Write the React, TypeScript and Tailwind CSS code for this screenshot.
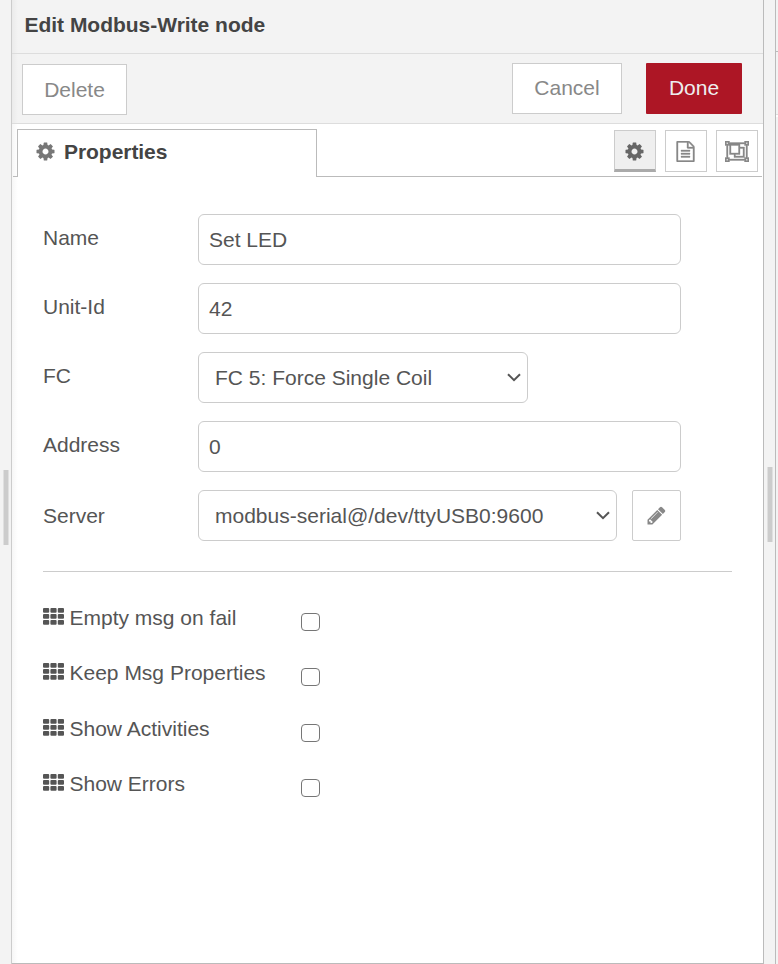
import type { ReactNode } from "react";

function Glyph({ d, wide = false, className = "" }: { d: string; wide?: boolean; className?: string }) {
  return (
    <svg viewBox={wide ? "0 0 2048 1792" : "0 0 1792 1792"} className={`${wide ? "h-[21px] w-6" : "h-[21px] w-[21px]"} shrink-0 fill-current ${className}`}>
      <path d={d} />
    </svg>
  );
}

const COG =
  "M1152 896q0-106-75-181t-181-75-181 75-75 181 75 181 181 75 181-75 75-181zm512-109v222q0 12-8 23t-20 13l-185 28q-19 54-39 91 35 50 107 138 10 12 10 25t-9 23q-27 37-99 108t-94 71q-12 0-26-9l-138-108q-44 23-91 38-16 136-29 186-7 28-36 28h-222q-14 0-24.5-8.5t-11.5-21.5l-28-184q-49-16-90-37l-141 107q-10 9-25 9-14 0-25-11-126-114-165-168-7-10-7-23 0-12 8-23 15-21 51-66.5t54-70.5q-27-50-41-99l-183-27q-13-2-21-12.5t-8-23.5v-222q0-12 8-23t19-13l186-28q14-46 39-92-40-57-107-138-10-12-10-24 0-10 9-23 26-36 98.5-107.5t94.5-71.5q13 0 26 10l138 107q44-23 91-38 16-136 29-186 7-28 36-28h222q14 0 24.5 8.5t11.5 21.5l28 184q49 16 90 37l142-107q9-9 24-9 13 0 25 10 129 119 165 170 7 8 7 22 0 12-8 23-15 21-51 66.5t-54 70.5q26 50 41 98l183 28q13 2 21 12.5t8 23.5z";
const FILE =
  "M1596 380q28 28 48 76t20 88v1152q0 40-28 68t-68 28h-1344q-40 0-68-28t-28-68v-1600q0-40 28-68t68-28h896q40 0 88 20t76 48zm-444-244v376h376q-10-29-22-41l-313-313q-12-12-41-22zm384 1528v-1024h-416q-40 0-68-28t-28-68v-416h-768v1536h1280zm-1024-864q0-14 9-23t23-9h704q14 0 23 9t9 23v64q0 14-9 23t-23 9h-704q-14 0-23-9t-9-23v-64zm736 224q14 0 23 9t9 23v64q0 14-9 23t-23 9h-704q-14 0-23-9t-9-23v-64q0-14 9-23t23-9h704zm0 256q14 0 23 9t9 23v64q0 14-9 23t-23 9h-704q-14 0-23-9t-9-23v-64q0-14 9-23t23-9h704z";
const GROUP =
  "M2048 384h-128v1024h128v384h-384v-128h-1280v128h-384v-384h128v-1024h-128v-384h384v128h1280v-128h384v384zm-256-256v128h128v-128h-128zm-1664 0v128h128v-128h-128zm128 1536v-128h-128v128h128zm1408-128v-128h128v-1024h-128v-128h-1280v128h-128v1024h128v128h1280zm256 128v-128h-128v128h128zm-640-1152h384v896h-896v-256h-384v-896h896v256zm-768 512h640v-640h-640v640zm1024 256v-640h-256v512h-384v128h640z";
const PENCIL =
  "M491 1536l91-91-235-235-91 91v107h128v128h107zm523-928q0-22-22-22-10 0-17 7l-542 542q-7 7-7 17 0 22 22 22 10 0 17-7l542-542q7-7 7-17zm-54-192l416 416-832 832h-416v-416zm683 96q0 53-37 90l-166 166-416-416 166-165q36-38 90-38 53 0 91 38l235 234q37 39 37 91z";

function GridIcon() {
  return (
    <svg viewBox="0 0 21 17" className="h-[17px] w-[21px] shrink-0 fill-current">
      {[0, 6, 12].map((y) =>
        [0, 7.4, 14.8].map((x) => <rect key={`${x}-${y}`} x={x} y={y} width="6.2" height="4.8" rx="1" />),
      )}
    </svg>
  );
}

function Chevron() {
  return (
    <svg viewBox="0 0 14 9" className="h-[9px] w-[14px] fill-none stroke-[#555] stroke-2">
      <path d="M1 1.2L7 7.2L13 1.2" />
    </svg>
  );
}

function Row({ label, low = false, children }: { label: string; low?: boolean; children: ReactNode }) {
  return (
    <div className="mb-[18px] flex h-[51px]">
      <div className={`w-[155px] leading-[30px] ${low ? "pt-[11px]" : "pt-[9px]"}`}>{label}</div>
      {children}
    </div>
  );
}

function Field({ value }: { value: string }) {
  return <div className="flex w-[483px] items-center rounded-[6px] border border-[#ccc] px-[10px] leading-[30px]">{value}</div>;
}

function Check({ label }: { label: string }) {
  return (
    <div className="flex h-[55.4px] items-start">
      <div className="pt-[5px]"><GridIcon /></div>
      <div className="ml-[5.5px] w-[231.5px] leading-[30px]">{label}</div>
      <div className="mt-[10px] h-[18px] w-[19px] rounded-[4px] border-[1.5px] border-[#767676] bg-white" />
    </div>
  );
}

export default function App() {
  return (
    <div className="flex h-[964px] w-[778px] overflow-hidden bg-[#f3f3f3] font-['Liberation_Sans',Arial,sans-serif] text-[21px] text-[#555]">
      <div className="flex w-3 shrink-0 flex-col border-r border-[#ccc] pl-[3px] pt-[470px]">
        <div className="h-[75px] w-[6px] border-x border-[#e0e0e0] bg-[#ccc]" />
      </div>

      <div className="flex w-[752px] shrink-0 flex-col border-r border-[#bbb] bg-[linear-gradient(to_right,rgba(0,0,0,0.035),transparent_6px)]">
        <div className="h-[54px] border-b border-[#ddd] pl-[12.5px] pt-[10px] font-bold leading-[30px] tracking-[-0.02px] text-[#444]">Edit Modbus-Write node</div>
        <div className="flex h-[70px] items-start border-b border-[#ddd] pl-[10px] pr-[21px] text-[#888]">
          <div className="mt-[10px] flex h-[51px] w-[105px] items-center justify-center border border-[#ccc] bg-white">Delete</div>
          <div className="ml-auto mt-[9px] flex h-[51px] w-[110px] items-center justify-center border border-[#ccc] bg-white pb-[2px]">Cancel</div>
          <div className="ml-6 mt-[9px] flex h-[51px] w-24 items-center justify-center rounded-[1px] bg-[#ad1625] pb-[2px] text-[#eee]">Done</div>
        </div>

        <div className="flex-1 border-b border-[#bbb] bg-white bg-[linear-gradient(to_right,rgba(0,0,0,0.035),transparent_6px)]">
          <div className="flex h-[53px] pt-[5px]">
            <div className="ml-px w-[4px] border-b border-[#bbb]" />
            <div className="flex h-12 w-[300px] items-center border border-b-0 border-[#bbb] bg-white pl-[17px] font-bold text-[#444]">
              <Glyph d={COG} className="mb-[5px] text-[#777]" />
              <span className="mb-[4px] ml-[8px] tracking-[-0.05px]">Properties</span>
            </div>
            <div className="mr-px flex flex-1 justify-end gap-[9px] border-b border-[#bbb] pr-[4px] pt-px text-[#888]">
              <div className="flex h-[42px] w-[42px] items-center justify-center border border-b-[3px] border-[#ccc] border-b-[#aaa] bg-[#efefef] pr-px pt-[2px] text-[#666]"><Glyph d={COG} /></div>
              <div className="flex h-[42px] w-[42px] items-center justify-center border border-[#ccc] pr-px"><Glyph d={FILE} className="stroke-current stroke-[30]" /></div>
              <div className="flex h-[42px] w-[42px] items-center justify-center border border-[#ccc]"><Glyph d={GROUP} wide className="stroke-current stroke-[30]" /></div>
            </div>
          </div>

          <div className="pl-[31px] pr-[31px] pt-[37px]">
            <Row label="Name"><Field value="Set LED" /></Row>
            <Row label="Unit-Id"><Field value="42" /></Row>
            <Row label="FC">
              <div className="flex w-[330px] items-center justify-between rounded-[6px] border border-[#ccc] pl-4 pr-[6px]">
                <span>FC 5: Force Single Coil</span><Chevron />
              </div>
            </Row>
            <Row label="Address"><Field value="0" /></Row>
            <Row label="Server" low>
              <div className="flex w-[419px] items-center justify-between rounded-[6px] border border-[#ccc] pl-4 pr-[6px]">
                <span>modbus-serial@/dev/ttyUSB0:9600</span><Chevron />
              </div>
              <div className="ml-[15px] flex w-[49px] items-center justify-center rounded-[2px] border border-[#ccc] text-[#888]"><Glyph d={PENCIL} /></div>
            </Row>
            <div className="mt-[30px] h-px w-[689px] bg-[#ccc]" />
            <div className="pt-[31px]">
              <Check label="Empty msg on fail" />
              <Check label="Keep Msg Properties" />
              <Check label="Show Activities" />
              <Check label="Show Errors" />
            </div>
          </div>
        </div>
      </div>

      <div className="flex w-[11px] shrink-0 flex-col pl-[3px] pt-[467px]">
        <div className="h-[75px] w-[6px] border-x border-[#e0e0e0] bg-[#ccc]" />
      </div>
      <div className="w-[3px] shrink-0 border-l border-[#bbb]">
        <div className="h-[52px] border-b border-[#bbb]" />
        <div className="h-[63px] border-b border-[#ddd]" />
        <div className="h-[2px] bg-white" />
      </div>
    </div>
  );
}
